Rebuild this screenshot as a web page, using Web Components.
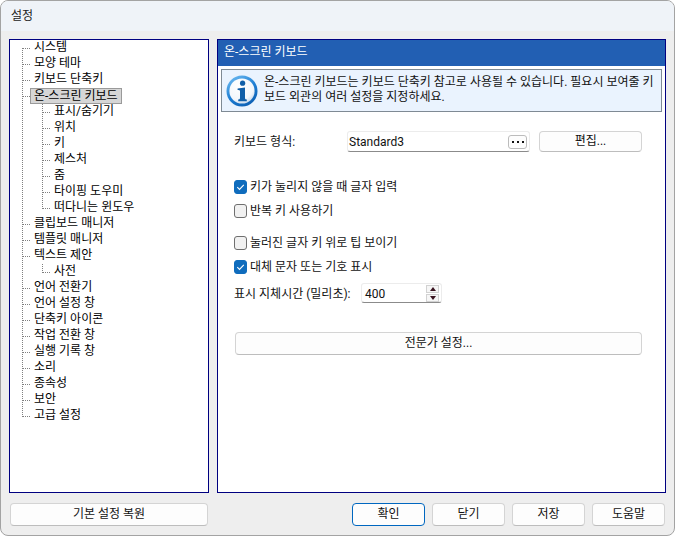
<!DOCTYPE html>
<html lang="ko">
<head>
<meta charset="utf-8">
<title>설정</title>
<style>
  html, body { margin: 0; height: 100%; background: #fff; overflow: hidden; }
  body { font: 12px/16px Roboto, "Noto Sans CJK KR", sans-serif; color: #111; }
</style>
</head>
<body>
<settings-window title="설정">
  <settings-tree slot="nav">
    <tree-item label="시스템" first></tree-item>
    <tree-item label="모양 테마"></tree-item>
    <tree-item label="키보드 단축키"></tree-item>
    <tree-item label="온-스크린 키보드" selected>
      <tree-item label="표시/숨기기"></tree-item>
      <tree-item label="위치"></tree-item>
      <tree-item label="키"></tree-item>
      <tree-item label="제스처"></tree-item>
      <tree-item label="줌"></tree-item>
      <tree-item label="타이핑 도우미"></tree-item>
      <tree-item label="떠다니는 윈도우" last></tree-item>
    </tree-item>
    <tree-item label="클립보드 매니저"></tree-item>
    <tree-item label="템플릿 매니저"></tree-item>
    <tree-item label="텍스트 제안">
      <tree-item label="사전" last></tree-item>
    </tree-item>
    <tree-item label="언어 전환기"></tree-item>
    <tree-item label="언어 설정 창"></tree-item>
    <tree-item label="단축키 아이콘"></tree-item>
    <tree-item label="작업 전환 창"></tree-item>
    <tree-item label="실행 기록 창"></tree-item>
    <tree-item label="소리"></tree-item>
    <tree-item label="종속성"></tree-item>
    <tree-item label="보안"></tree-item>
    <tree-item label="고급 설정" last></tree-item>
  </settings-tree>

  <settings-panel slot="panel" heading="온-스크린 키보드">
    <info-banner>온-스크린 키보드는 키보드 단축키 참고로 사용될 수 있습니다. 필요시 보여줄 키보드 외관의 여러 설정을 지정하세요.</info-banner>
    <keyboard-form>
      <combo-field slot="type" label="키보드 형식:" value="Standard3"></combo-field>
      <check-row slot="checks" checked>키가 눌리지 않을 때 글자 입력</check-row>
      <check-row slot="checks">반복 키 사용하기</check-row>
      <check-row slot="checks" gap>눌러진 글자 키 위로 팁 보이기</check-row>
      <check-row slot="checks" checked>대체 문자 또는 기호 표시</check-row>
      <spin-field slot="delay" label="표시 지체시간 (밀리초):" value="400"></spin-field>
      <push-button slot="expert">전문가 설정...</push-button>
    </keyboard-form>
  </settings-panel>

  <push-button slot="restore">기본 설정 복원</push-button>
  <push-button slot="actions" primary>확인</push-button>
  <push-button slot="actions">닫기</push-button>
  <push-button slot="actions">저장</push-button>
  <push-button slot="actions">도움말</push-button>
</settings-window>

<script>
class SettingsWindow extends HTMLElement {
  constructor() {
    super();
    this.attachShadow({ mode: 'open' });
  }

  connectedCallback() {
    this.shadowRoot.innerHTML = `
      <style>
        :host {
          display: flex;
          flex-direction: column;
          box-sizing: border-box;
          width: 675px;
          height: 536px;
          border: 1px solid #a3a3a3;
          border-radius: 8px;
          background: #eeeeee;
          overflow: hidden;
        }
        .titlebar {
          height: 30px;
          padding-left: 10px;
          line-height: 31px;
          background: #eff3f8;
          color: #1a1a1a;
        }
        .main {
          display: flex;
          gap: 8px;
          height: 454px;
          margin: 8px 8px 0;
        }
        .footer {
          display: flex;
          justify-content: space-between;
          margin: 10px 9px 0 9px;
        }
        .restore { display: block; width: 198px; }
        .actions { display: grid; grid-template-columns: repeat(4, 73px); gap: 7px; }
        ::slotted([slot="restore"]), ::slotted([slot="actions"]) { height: 23px; }
      </style>
      <div class="titlebar">${this.getAttribute('title') || ''}</div>
      <div class="main">
        <slot name="nav"></slot>
        <slot name="panel"></slot>
      </div>
      <div class="footer">
        <div class="restore"><slot name="restore"></slot></div>
        <div class="actions"><slot name="actions"></slot></div>
      </div>
    `;
  }
}

class SettingsTree extends HTMLElement {
  constructor() {
    super();
    this.attachShadow({ mode: 'open' });
    this.shadowRoot.innerHTML = `
      <style>
        :host {
          display: block;
          box-sizing: border-box;
          width: 200px;
          height: 454px;
          padding-left: 12px;
          border: 1px solid #000080;
          background: #fff;
        }
      </style>
      <slot></slot>
    `;
  }
}

class TreeItem extends HTMLElement {
  constructor() {
    super();
    this.attachShadow({ mode: 'open' });
  }

  connectedCallback() {
    const first = this.hasAttribute('first');
    const last = this.hasAttribute('last');
    const selected = this.hasAttribute('selected');
    this.shadowRoot.innerHTML = `
      <style>
        :host {
          display: block;
          position: relative;
        }
        .trunk {
          position: absolute;
          left: 0;
          top: ${first ? '8px' : '0'};
          bottom: 0;
          ${last ? 'height: 9px;' : ''}
          width: 1px;
          background: repeating-linear-gradient(to bottom, #808080 0 1px, transparent 1px 2px);
        }
        .row {
          display: flex;
          align-items: center;
          height: 16px;
        }
        .branch {
          flex: none;
          width: 8px;
          height: 1px;
          margin-left: 1px;
          background: repeating-linear-gradient(to right, #808080 0 1px, transparent 1px 2px);
        }
        .label {
          box-sizing: border-box;
          height: 16px;
          margin-left: ${selected ? '-1px' : '3px'};
          padding: ${selected ? '0 3px' : '0'};
          border: ${selected ? '1px solid #9a9a9a' : '0'};
          background: ${selected ? '#d6d6d6' : 'transparent'};
          line-height: 14px;
          white-space: nowrap;
          color: #000;
        }
        .children { padding-left: 20px; }
      </style>
      <div class="trunk"></div>
      <div class="row"><span class="branch"></span><span class="label">${this.getAttribute('label')}</span></div>
      <div class="children"><slot></slot></div>
    `;
  }
}

class SettingsPanel extends HTMLElement {
  constructor() {
    super();
    this.attachShadow({ mode: 'open' });
  }

  connectedCallback() {
    this.shadowRoot.innerHTML = `
      <style>
        :host {
          display: flex;
          flex-direction: column;
          box-sizing: border-box;
          width: 449px;
          height: 454px;
          border: 1px solid #000080;
          background: #fff;
        }
        h2 {
          margin: 0;
          height: 26px;
          padding-left: 6px;
          font: inherit;
          line-height: 25px;
          color: #fff;
          background: #225fb3;
        }
      </style>
      <h2>${this.getAttribute('heading')}</h2>
      <slot></slot>
    `;
  }
}

class InfoBanner extends HTMLElement {
  constructor() {
    super();
    this.attachShadow({ mode: 'open' });
    this.shadowRoot.innerHTML = `
      <style>
        :host {
          display: flex;
          align-items: center;
          gap: 6px;
          box-sizing: border-box;
          height: 43px;
          margin: 3px 3px 0;
          padding: 0 4px;
          border: 1px solid #7f8a94;
          background: #eaf3fe;
          line-height: 15px;
        }
        svg { flex: none; display: block; }
        p { margin: 0 0 2px; word-break: break-all; }
      </style>
      <svg width="32" height="32" viewBox="0 0 32 32">
        <defs>
          <linearGradient id="ring" x1="0.2" y1="0" x2="0.8" y2="1">
            <stop offset="0" stop-color="#6ab8f0"/>
            <stop offset="0.5" stop-color="#1f7fd4"/>
            <stop offset="1" stop-color="#0b5cb0"/>
          </linearGradient>
          <radialGradient id="face" cx="0.4" cy="0.3" r="0.8">
            <stop offset="0" stop-color="#ffffff"/>
            <stop offset="0.7" stop-color="#f2f6fb"/>
            <stop offset="1" stop-color="#bcd0e6"/>
          </radialGradient>
        </defs>
        <circle cx="16" cy="16" r="15.5" fill="url(#ring)"/>
        <circle cx="16" cy="16" r="12.6" fill="url(#face)"/>
        <circle cx="16.6" cy="8.2" r="2.6" fill="#0f5ea8"/>
        <path d="M11.6 13.6L19 12.6V23.2Q19 24.4 20.8 24.6V26.2H12.2V24.6Q14 24.4 14 23.2V16Q14 14.9 11.6 15.1Z" fill="#0f5ea8"/>
      </svg>
      <p><slot></slot></p>
    `;
  }
}

class KeyboardForm extends HTMLElement {
  constructor() {
    super();
    this.attachShadow({ mode: 'open' });
    this.shadowRoot.innerHTML = `
      <style>
        :host {
          display: flex;
          flex-direction: column;
          padding: 19px 23px 0 16px;
        }
        .checks { display: flex; flex-direction: column; gap: 8px; margin-top: 27px; }
        .delay { margin-top: 8px; }
        .expert { margin: 29px 0 0 1px; }
        ::slotted(push-button) { height: 23px; }
      </style>
      <slot name="type"></slot>
      <div class="checks"><slot name="checks"></slot></div>
      <div class="delay"><slot name="delay"></slot></div>
      <div class="expert"><slot name="expert"></slot></div>
    `;
  }
}

class ComboField extends HTMLElement {
  constructor() {
    super();
    this.attachShadow({ mode: 'open' });
  }

  connectedCallback() {
    this.shadowRoot.innerHTML = `
      <style>
        :host {
          display: grid;
          grid-template-columns: 113px 183px auto;
          align-items: center;
          height: 21px;
        }
        .box {
          display: flex;
          align-items: center;
          justify-content: space-between;
          box-sizing: border-box;
          height: 21px;
          padding: 0 2px 0 1px;
          border: 1px solid #ececec;
          border-bottom-color: #8b8b8b;
          border-radius: 3px;
          background: #fff;
        }
        .dots {
          display: flex;
          align-items: center;
          justify-content: center;
          gap: 3px;
          box-sizing: border-box;
          width: 19px;
          height: 14px;
          border: 1px solid #bcbcbc;
          border-radius: 3px;
          background: #fdfdfd;
        }
        .dots i { width: 2px; height: 2px; background: #111; }
        .edit { margin-left: 9px; height: 21px; width: 103px; box-sizing: border-box; }
      </style>
      <span class="label">${this.getAttribute('label')}</span>
      <div class="box">
        <span>${this.getAttribute('value')}</span>
        <span class="dots"><i></i><i></i><i></i></span>
      </div>
      <push-button class="edit">편집...</push-button>
    `;
  }
}

class CheckRow extends HTMLElement {
  constructor() {
    super();
    this.attachShadow({ mode: 'open' });
  }

  connectedCallback() {
    const checked = this.hasAttribute('checked');
    this.shadowRoot.innerHTML = `
      <style>
        :host {
          display: flex;
          align-items: center;
          gap: 3px;
          height: 16px;
          ${this.hasAttribute('gap') ? 'margin-top: 8px;' : ''}
        }
        .mark {
          flex: none;
          display: block;
          box-sizing: border-box;
          width: 13px;
          height: 14px;
          border-radius: 3px;
          border: 1px solid ${checked ? '#0f6cbd' : '#6f6f6f'};
          background: ${checked ? '#0f6cbd' : '#f1f1f1'};
        }
        .mark svg { display: block; }
        .text { white-space: nowrap; }
      </style>
      <span class="mark">${checked ? '<svg width="11" height="12" viewBox="0 0 11 12"><path d="M2.3 6.2l2.2 2.2 4.3-4.6" fill="none" stroke="#fff" stroke-width="1.1"/></svg>' : ''}</span>
      <span class="text"><slot></slot></span>
    `;
  }
}

class SpinField extends HTMLElement {
  constructor() {
    super();
    this.attachShadow({ mode: 'open' });
  }

  connectedCallback() {
    this.shadowRoot.innerHTML = `
      <style>
        :host {
          display: grid;
          grid-template-columns: 127px 81px;
          align-items: center;
          height: 20px;
        }
        .label { padding-top: 1px; }
        .box {
          display: flex;
          align-items: center;
          justify-content: space-between;
          box-sizing: border-box;
          height: 20px;
          padding: 0 2px 0 3px;
          border: 1px solid #ececec;
          border-bottom-color: #8b8b8b;
          border-radius: 3px;
          background: #fff;
        }
        .value { padding-top: 1px; }
        .spin { display: flex; flex-direction: column; gap: 1px; }
        .spin span {
          display: flex;
          align-items: center;
          justify-content: center;
          box-sizing: border-box;
          width: 13px;
          height: 8px;
          border: 1px solid #d2d2d2;
          background: #f6f6f6;
        }
        .up { width: 0; height: 0; border: 3px solid transparent; border-top: 0; border-bottom: 4px solid #3a1420; }
        .down { width: 0; height: 0; border: 3px solid transparent; border-bottom: 0; border-top: 4px solid #3a1420; }
      </style>
      <span class="label">${this.getAttribute('label')}</span>
      <div class="box">
        <span class="value">${this.getAttribute('value')}</span>
        <div class="spin"><span><i class="up"></i></span><span><i class="down"></i></span></div>
      </div>
    `;
  }
}

class PushButton extends HTMLElement {
  constructor() {
    super();
    this.attachShadow({ mode: 'open' });
  }

  connectedCallback() {
    const primary = this.hasAttribute('primary');
    this.shadowRoot.innerHTML = `
      <style>
        :host {
          display: flex;
          align-items: center;
          justify-content: center;
          box-sizing: border-box;
          padding-bottom: 1px;
          border: 1px solid ${primary ? '#0067c0' : '#d4d4d4'};
          border-bottom-color: ${primary ? '#0067c0' : '#bdbdbd'};
          border-radius: 4px;
          background: #fdfdfd;
          color: #111;
          white-space: nowrap;
        }
      </style>
      <slot></slot>
    `;
  }
}

customElements.define('settings-window', SettingsWindow);
customElements.define('settings-tree', SettingsTree);
customElements.define('tree-item', TreeItem);
customElements.define('settings-panel', SettingsPanel);
customElements.define('info-banner', InfoBanner);
customElements.define('keyboard-form', KeyboardForm);
customElements.define('combo-field', ComboField);
customElements.define('check-row', CheckRow);
customElements.define('spin-field', SpinField);
customElements.define('push-button', PushButton);
</script>
</body>
</html>
